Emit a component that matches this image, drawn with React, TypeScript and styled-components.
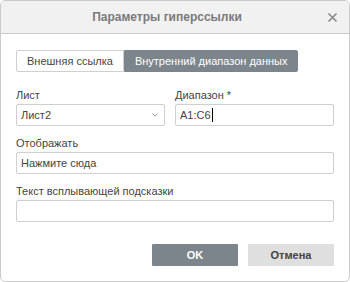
import styled, { createGlobalStyle } from "styled-components";

const GlobalStyle = createGlobalStyle`
    html, body {
        margin: 0;
        padding: 0;
        background: #ffffff;
    }
    * {
        box-sizing: border-box;
    }
`;

const Dialog = styled.div`
    width: 350px;
    height: 282px;
    border: 1px solid #cbcbcb;
    border-radius: 5px;
    background: #ffffff;
    overflow: hidden;
    display: flex;
    flex-direction: column;
    font-family: "Liberation Sans", Arial, sans-serif;
    font-size: 11px;
    color: #444444;
`;

const Header = styled.div`
    height: 33px;
    flex-shrink: 0;
    background: #f1f1f1;
    border-bottom: 1px solid #cbcbcb;
    display: flex;
    align-items: center;
    justify-content: center;
    padding-right: 16px;
    position: relative;
`;

const Title = styled.div`
    font-size: 12px;
    font-weight: 700;
    color: #7a7a7a;
`;

const CloseButton = styled.button`
    position: absolute;
    right: 11px;
    top: 11px;
    width: 11px;
    height: 11px;
    padding: 0;
    border: none;
    background: none;
    display: flex;
    align-items: center;
    justify-content: center;
`;

const Body = styled.div`
    padding: 16px 15px 15px;
    display: flex;
    flex-direction: column;
    flex: 1;
`;

const Tabs = styled.div`
    display: flex;
    margin-bottom: 16px;
`;

const Tab = styled.div<{ $active?: boolean }>`
    height: 22px;
    padding: 0 10px;
    display: flex;
    align-items: center;
    border: 1px solid ${props => props.$active ? "#7d858c" : "#cfcfcf"};
    background: ${props => props.$active ? "#7d858c" : "#ffffff"};
    color: ${props => props.$active ? "#ffffff" : "#444444"};
    &:first-child {
        border-radius: 2px 0 0 2px;
    }
    &:last-child {
        border-radius: 0 2px 2px 0;
    }
`;

const Row = styled.div`
    display: grid;
    grid-template-columns: 149px 1fr;
    column-gap: 10px;
    margin-bottom: 10px;
`;

const Group = styled.div`
    display: flex;
    flex-direction: column;
    margin-bottom: 10px;
`;

const Label = styled.div`
    line-height: 14px;
    height: 14px;
    margin-bottom: 2px;
    color: #444444;
`;

const Field = styled.div`
    height: 22px;
    border: 1px solid #cfcfcf;
    border-radius: 2px;
    padding: 0 4px;
    display: flex;
    align-items: center;
    color: #444444;
    position: relative;
`;

const Caret = styled.span`
    display: inline-block;
    width: 1px;
    height: 14px;
    background: #000000;
    margin-left: 1px;
`;

const Chevron = styled.span`
    position: absolute;
    right: 6px;
    top: 8px;
    display: flex;
`;

const Footer = styled.div`
    margin-top: auto;
    display: flex;
    justify-content: flex-end;
    gap: 10px;
`;

const Button = styled.button<{ $primary?: boolean }>`
    width: 86px;
    height: 22px;
    border: none;
    border-radius: 1px;
    font-family: "Liberation Sans", Arial, sans-serif;
    font-size: 11px;
    font-weight: 700;
    background: ${props => props.$primary ? "#7d858c" : "#dfdfdf"};
    color: ${props => props.$primary ? "#ffffff" : "#444444"};
    padding: 0;
`;

function App() {
    return (
        <>
            <GlobalStyle />
            <Dialog>
                <Header>
                    <Title>Параметры гиперссылки</Title>
                    <CloseButton>
                        <svg width="11" height="11" viewBox="0 0 11 11">
                            <path d="M1.5 1.5 L9.5 9.5 M9.5 1.5 L1.5 9.5" stroke="#888888" strokeWidth="1.6" />
                        </svg>
                    </CloseButton>
                </Header>
                <Body>
                    <Tabs>
                        <Tab>Внешняя ссылка</Tab>
                        <Tab $active>Внутренний диапазон данных</Tab>
                    </Tabs>
                    <Row>
                        <div>
                            <Label>Лист</Label>
                            <Field>
                                Лист2
                                <Chevron>
                                    <svg width="6" height="4" viewBox="0 0 6 4">
                                        <path d="M0.5 0.5 L3 3 L5.5 0.5" stroke="#999999" strokeWidth="1" fill="none" />
                                    </svg>
                                </Chevron>
                            </Field>
                        </div>
                        <div>
                            <Label>Диапазон *</Label>
                            <Field>
                                A1:C6<Caret />
                            </Field>
                        </div>
                    </Row>
                    <Group>
                        <Label>Отображать</Label>
                        <Field>Нажмите сюда</Field>
                    </Group>
                    <Group>
                        <Label>Текст всплывающей подсказки</Label>
                        <Field />
                    </Group>
                    <Footer>
                        <Button $primary>OK</Button>
                        <Button>Отмена</Button>
                    </Footer>
                </Body>
            </Dialog>
        </>
    );
}

export default App;
